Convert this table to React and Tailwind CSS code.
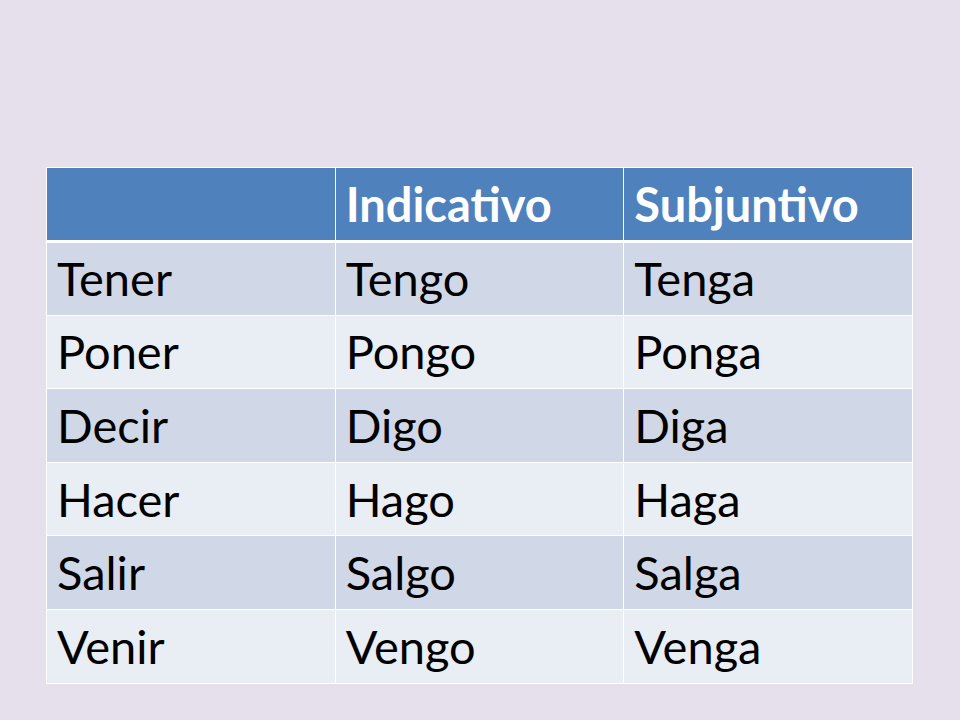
import React from "react";

const rows = [
  ["Tener", "Tengo", "Tenga"],
  ["Poner", "Pongo", "Ponga"],
  ["Decir", "Digo", "Diga"],
  ["Hacer", "Hago", "Haga"],
  ["Salir", "Salgo", "Salga"],
  ["Venir", "Vengo", "Venga"],
];

export default function App() {
  return (
    <div
      className="w-[960px] h-[720px] bg-[#e6e0ec] pt-[167px] pl-[46px]"
      style={{ fontFamily: "Lato, 'Open Sans', sans-serif" }}
    >
      <table className="w-[867px] border-collapse table-fixed">
        <thead>
          <tr className="h-[74px] bg-[#4f81bd] border-b-[3px] border-white">
            <th className="border border-white"></th>
            <th className="border border-white text-left pl-[10px] text-[47px] font-bold text-white leading-none">
              Indicativo
            </th>
            <th className="border border-white text-left pl-[10px] text-[47px] font-bold text-white leading-none">
              Subjuntivo
            </th>
          </tr>
        </thead>
        <tbody>
          {rows.map((r, i) => (
            <tr
              key={i}
              className={`h-[73.6px] ${i % 2 === 0 ? "bg-[#d0d8e8]" : "bg-[#e9edf4]"}`}
            >
              {r.map((c, j) => (
                <td
                  key={j}
                  className="border border-white pl-[10px] text-[47px] text-black leading-none"
                >
                  {c}
                </td>
              ))}
            </tr>
          ))}
        </tbody>
      </table>
    </div>
  );
}
